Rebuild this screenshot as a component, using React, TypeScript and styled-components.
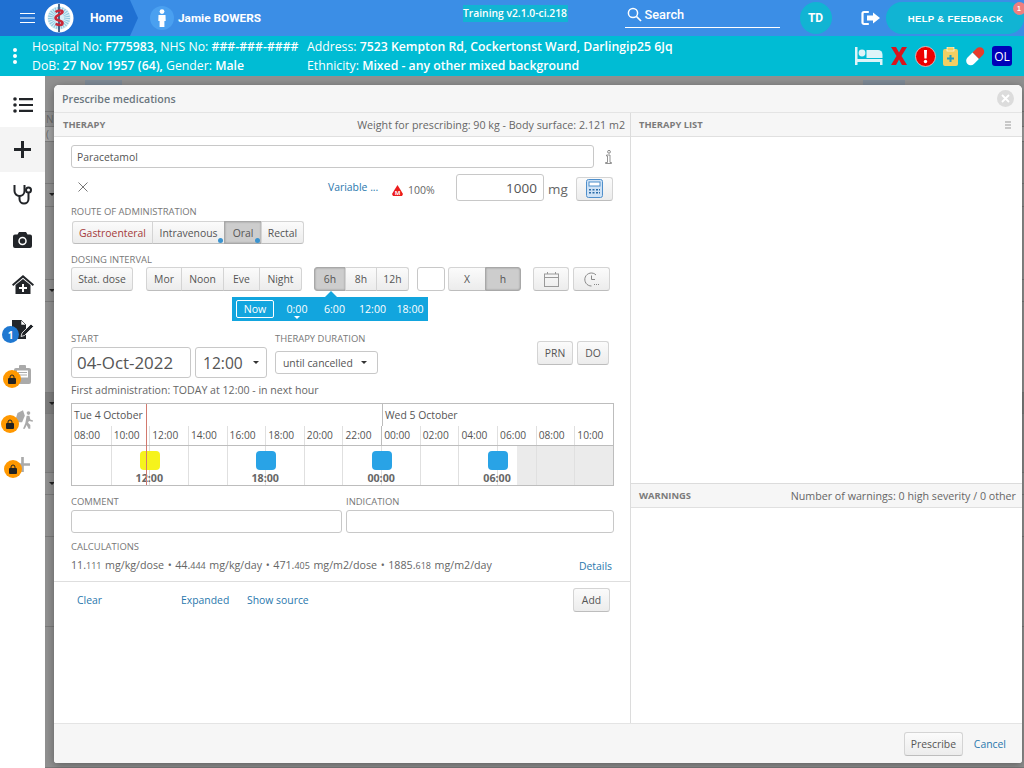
import React from "react";
import styled, { createGlobalStyle } from "styled-components";

const Global = createGlobalStyle`
  html, body { margin: 0; padding: 0; height: 768px; width: 1024px; overflow: hidden; background: #909090; }
  #root { width: 1024px; height: 768px; }
  * { box-sizing: border-box; }
`;

const Page = styled.div`
  position: relative;
  width: 1024px;
  height: 768px;
  overflow: hidden;
  display: flex;
  flex-direction: column;
  font-family: "Open Sans", sans-serif;
`;

const TopBar = styled.header`
  height: 36px;
  flex: none;
  display: flex;
  align-items: center;
  background: #3b8ee6;
  color: #fff;
  font-family: Roboto, sans-serif;
`;

const HomeCrumb = styled.div`
  height: 36px;
  width: 138px;
  flex: none;
  display: flex;
  align-items: center;
  padding-left: 20px;
  background: #1f70d2;
  clip-path: polygon(0 0, 130px 0, 138px 18px, 130px 36px, 0 36px);
  font-size: 12.2px;
  font-weight: 700;
`;

const Burger = styled.svg`
  width: 16px;
  height: 10px;
  flex: none;
`;

const LogoMark = styled.svg`
  width: 30px;
  height: 30px;
  flex: none;
  margin-left: 8px;
  margin-right: 16px;
`;

const Avatar = styled.div`
  width: 24px;
  height: 24px;
  border-radius: 50%;
  margin-left: 12px;
  background: #4aa0f0;
  display: flex;
  align-items: center;
  justify-content: center;
  flex: none;
`;

const PatientName = styled.div`
  font-size: 11.8px;
  font-weight: 700;
  margin-left: 4px;
  width: 284.5px;
  flex: none;
`;

const Version = styled.div`
  font-family: "Open Sans", sans-serif;
  background: #11b4d3;
  font-size: 10.3px;
  font-weight: 600;
  line-height: 17px;
  height: 17px;
  width: 105px;
  flex: none;
  margin-top: -9px;
  white-space: nowrap;
  text-align: center;
`;

const SearchBox = styled.div`
  margin-left: 57px;
  width: 155px;
  height: 24px;
  margin-top: -4px;
  padding: 0 0 3px 2px;
  flex: none;
  display: flex;
  align-items: center;
  gap: 3px;
  border-bottom: 1px solid #fff;
  font-size: 12.8px;
  font-weight: 500;
`;

const UserBadge = styled.div`
  width: 32px;
  height: 32px;
  margin-left: 20px;
  border-radius: 50%;
  background: #11b4d3;
  display: flex;
  align-items: center;
  justify-content: center;
  font-size: 12px;
  font-weight: 700;
  flex: none;
`;

const Exit = styled.svg`
  width: 20px;
  height: 16px;
  margin-left: 29px;
  flex: none;
`;

const HelpButton = styled.div`
  position: relative;
  width: 138px;
  height: 32px;
  margin-left: 5px;
  flex: none;
  border-radius: 16px;
  background: #11b4d3;
  display: flex;
  align-items: center;
  justify-content: center;
  font-family: "Liberation Sans", sans-serif;
  font-size: 9.6px;
  font-weight: 700;
  letter-spacing: 0.3px;
  padding-left: 2px;
`;

const Notice = styled.span`
  position: absolute;
  right: -2px;
  top: 0;
  width: 13px;
  height: 13px;
  border-radius: 50%;
  background: #ef7f7f;
  font-size: 7px;
  letter-spacing: 0;
  line-height: 13px;
  text-align: center;
`;

const PatientBar = styled.div`
  height: 40px;
  flex: none;
  display: flex;
  align-items: center;
  background: #00bcd4;
  color: #fff;
  font-size: 12.25px;
  line-height: 19px;
`;

const DotsSlot = styled.div`
  width: 32px;
  padding-right: 2px;
  display: flex;
  flex-direction: column;
  align-items: center;
  gap: 2px;
  flex: none;
`;

const Dot = styled.i`
  width: 4px;
  height: 4px;
  border-radius: 50%;
  background: #fff;
`;

const PatientCol = styled.div<{ $w: number }>`
  width: ${p => p.$w}px;
  flex: none;
  white-space: nowrap;
  b { font-weight: 600; }
`;

const AlertIcons = styled.div`
  flex: 1;
  display: flex;
  align-items: center;
  justify-content: flex-end;
  gap: 7px;
  padding-right: 12px;
`;

const OlBadge = styled.div`
  width: 20px;
  height: 20px;
  background: #0000b8;
  border-radius: 3px;
  font-size: 12px;
  text-align: center;
  line-height: 21px;
`;

const Body = styled.div`
  flex: 1;
  display: flex;
  min-height: 0;
`;

const Sidebar = styled.nav`
  width: 45px;
  flex: none;
  background: #fff;
  display: flex;
  flex-direction: column;
  padding-top: 6px;
`;

const SideItem = styled.div<{ $on?: boolean }>`
  position: relative;
  height: 45px;
  display: flex;
  align-items: center;
  justify-content: center;
  background: ${p => (p.$on ? "#f4f4f4" : "transparent")};
`;

const SideBadge = styled.span<{ $bg: string; $l: number; $t: number; $s: number }>`
  position: absolute;
  left: ${p => p.$l}px;
  top: ${p => p.$t}px;
  width: ${p => p.$s}px;
  height: ${p => p.$s}px;
  border-radius: 50%;
  background: ${p => p.$bg};
  color: #fff;
  font-size: 10px;
  font-weight: 700;
  display: flex;
  align-items: center;
  justify-content: center;
`;

const Backdrop = styled.div`
  flex: 1;
  background: #909090;
  display: flex;
  flex-direction: column;
  min-width: 0;
`;

const TabStrip = styled.div`
  height: 9px;
  flex: none;
  display: flex;
  padding-top: 4px;
`;

const TabShade = styled.i<{ $l: number; $w: number }>`
  margin-left: ${p => p.$l}px;
  width: ${p => p.$w}px;
  background: #7e8a96;
`;

const BgRow = styled.div<{ $h: number; $bg?: string }>`
  position: relative;
  height: ${p => p.$h}px;
  flex: none;
  background: ${p => p.$bg ?? "#909090"};
  border-bottom: 1px solid #7a7a7a;
  color: #666;
  font-size: 10px;
  line-height: ${p => p.$h}px;
  padding-left: 1px;
`;

const BgCaret = styled.i`
  position: absolute;
  left: 4px;
  top: 9px;
  border-left: 3px solid transparent;
  border-right: 3px solid transparent;
  border-top: 3px solid #222;
`;

const Modal = styled.section`
  position: absolute;
  left: 54px;
  top: 85px;
  width: 968px;
  height: 678px;
  background: #fff;
  border-radius: 5px 5px 3px 3px;
  box-shadow: 0 2px 8px rgba(0, 0, 0, 0.35);
  display: flex;
  flex-direction: column;
  color: #555;
  font-size: 10.4px;
`;

const ModalHead = styled.div`
  height: 28px;
  flex: none;
  display: flex;
  align-items: center;
  justify-content: space-between;
  padding: 0 8px;
  background: #f6f6f6;
  border-bottom: 1px solid #e4e4e4;
  border-radius: 5px 5px 0 0;
  font-size: 10.65px;
  font-weight: 600;
  color: #6b7780;
`;

const CloseDisc = styled.div`
  width: 17px;
  height: 17px;
  border-radius: 50%;
  background: #dcdcdc;
  display: flex;
  align-items: center;
  justify-content: center;
`;

const Panels = styled.div`
  flex: 1;
  display: flex;
  min-height: 0;
`;

const LeftPanel = styled.div`
  width: 577px;
  flex: none;
  border-right: 1px solid #dcdcdc;
  display: flex;
  flex-direction: column;
`;

const RightPanel = styled.div`
  flex: 1;
  display: flex;
  flex-direction: column;
`;

const SectionHead = styled.div`
  height: 24px;
  flex: none;
  display: flex;
  align-items: center;
  justify-content: space-between;
  padding: 0 5px 0 9px;
  background: #f6f6f6;
  border-bottom: 1px solid #e0e0e0;
  color: #777;
  b { font-size: 9.4px; font-weight: 700; color: #7b7b7b; }
`;

const RightHead = styled(SectionHead)`
  padding: 0 6px 0 8px;
`;

const HeadNote = styled.span`
  color: #666;
  font-size: 10.7px;
`;

const MenuGlyph = styled.svg`
  width: 6px;
  height: 8px;
  margin-right: 5px;
`;

const Form = styled.div`
  padding: 0 16px 0 17px;
  flex: none;
  display: flex;
  flex-direction: column;
`;

const DrugRow = styled.div`
  display: flex;
  align-items: center;
  margin-top: 8px;
`;

const TextBox = styled.div<{ $h?: number; $w?: number }>`
  height: ${p => p.$h ?? 23}px;
  ${p => (p.$w ? `width: ${p.$w}px; flex: none;` : "flex: 1;")}
  border: 1px solid #c8c8c8;
  border-radius: 3px;
  background: #fff;
  display: flex;
  align-items: center;
`;

const DrugName = styled.span`
  padding-left: 5px;
  font-size: 10.4px;
  color: #555;
`;

const InfoMark = styled.svg`
  width: 7px;
  height: 14px;
  margin-left: 11px;
  margin-right: 2px;
  flex: none;
`;

const DoseRow = styled.div`
  display: flex;
  align-items: center;
  height: 27px;
  margin-top: 6px;
`;

const Cross = styled.svg`
  width: 10px;
  height: 10px;
  margin-left: 7px;
  margin-top: -2px;
  flex: none;
`;

const Link = styled.a`
  color: #2a78ad;
  font-size: 10.4px;
`;

const VariableLink = styled(Link)`
  margin-left: 240px;
  width: 64px;
  flex: none;
  margin-top: -1px;
`;

const MassIcon = styled.svg`
  width: 11px;
  height: 11px;
  margin-top: 5px;
  flex: none;
`;

const Percent = styled.span`
  color: #666;
  font-size: 10.5px;
  margin-left: 5px;
  margin-top: 4px;
  width: 48px;
  flex: none;
`;

const DoseValue = styled.span`
  width: 100%;
  text-align: right;
  padding-right: 6px;
  font-size: 13.5px;
  color: #555;
`;

const Unit = styled.span`
  font-size: 13.4px;
  color: #666;
  margin-left: 4px;
  margin-right: 8px;
  margin-top: 3px;
`;

const Btn = styled.div<{ $w?: number; $h?: number; $on?: boolean; $red?: boolean }>`
  ${p => (p.$w ? `width: ${p.$w}px;` : "")}
  height: ${p => p.$h ?? 24}px;
  flex: none;
  display: flex;
  align-items: center;
  justify-content: center;
  position: relative;
  font-size: 10.4px;
  color: ${p => (p.$red ? "#a53a3a" : "#555")};
  border: 1px solid ${p => (p.$on ? "#a8a8a8" : "#d4d4d4")};
  border-bottom-color: ${p => (p.$on ? "#a8a8a8" : "#bdbdbd")};
  border-radius: 3px;
  background: ${p => (p.$on ? "#cdcdcd" : "linear-gradient(#fbfbfb, #ececec)")};
  ${p => (p.$on ? "box-shadow: inset 0 0 2px #8a8a8a;" : "")}
`;

const CalcBtn = styled(Btn)`
  margin-top: 2px;
`;

const Group = styled.div`
  display: flex;
  flex: none;
  ${Btn} { border-radius: 0; margin-left: -1px; }
  ${Btn}:first-child { border-radius: 3px 0 0 3px; margin-left: 0; }
  ${Btn}:last-child { border-radius: 0 3px 3px 0; }
`;

const MealGroup = styled(Group)`
  margin-left: 13px;
`;

const SixGroup = styled(Group)`
  margin-left: 12px;
`;

const XGroup = styled(Group)`
  margin-left: 3px;
`;

const BlankBox = styled(TextBox)`
  margin-left: 8px;
`;

const CalendarBtn = styled(Btn)`
  margin-left: 12px;
`;

const ClockBtn = styled(Btn)`
  margin-left: 4px;
`;

const FieldLabel = styled.div<{ $mt?: number }>`
  font-size: 9.45px;
  line-height: 12px;
  color: #777;
  margin-top: ${p => p.$mt ?? 0}px;
  white-space: nowrap;
`;

const RouteRow = styled.div`
  display: flex;
  margin-top: 3px;
  margin-left: 1px;
`;

const Pip = styled.i`
  position: absolute;
  right: 1px;
  bottom: 0;
  width: 5px;
  height: 5px;
  border-radius: 50%;
  background: #3a93cf;
  z-index: 1;
`;

const IntervalRow = styled.div`
  display: flex;
  align-items: center;
  margin-top: 1px;
`;

const TimesPop = styled.div`
  position: relative;
  align-self: flex-start;
  margin-left: 161px;
  width: 196px;
  height: 24px;
  margin-top: 6px;
  background: #12a5de;
  color: #fff;
  display: flex;
  align-items: center;
  font-size: 10.6px;
  &::before {
    content: "";
    position: absolute;
    left: 93px;
    top: -6px;
    border-left: 6px solid transparent;
    border-right: 6px solid transparent;
    border-bottom: 6px solid #12a5de;
  }
`;

const NowChip = styled.span`
  width: 38px;
  height: 18px;
  margin-left: 4px;
  border: 1px solid #fff;
  border-radius: 2px;
  display: flex;
  align-items: center;
  justify-content: center;
  flex: none;
`;

const Slot = styled.span<{ $w: number; $mark?: boolean }>`
  width: ${p => p.$w}px;
  flex: none;
  text-align: center;
  position: relative;
  ${p =>
    p.$mark
      ? `&::after {
    content: "";
    position: absolute;
    left: 50%;
    margin-left: -3px;
    bottom: -3px;
    border-left: 3px solid transparent;
    border-right: 3px solid transparent;
    border-top: 3px solid #fff;
  }`
      : ""}
`;

const StartRow = styled.div`
  display: flex;
  margin-top: 12px;
`;

const StartCol = styled.div<{ $w: number }>`
  width: ${p => p.$w}px;
  flex: none;
  display: flex;
  flex-direction: column;
`;

const DateField = styled(TextBox)`
  margin-top: 2px;
  font-size: 16.9px;
  color: #555;
  padding-left: 5px;
`;

const TimeField = styled(DateField)`
  padding-left: 7px;
  font-size: 15.6px;
  gap: 10px;
`;

const Caret = styled.i`
  width: 0;
  height: 0;
  border-left: 3.5px solid transparent;
  border-right: 3.5px solid transparent;
  border-top: 3.5px solid #333;
`;

const Until = styled(TextBox)`
  margin-top: 6px;
  font-size: 10.4px;
  color: #555;
  padding-left: 7px;
  gap: 8px;
`;

const SmallBtnGroup = styled.div`
  display: flex;
  gap: 4px;
  margin-left: auto;
  margin-right: 5px;
  margin-top: 8px;
  height: 24px;
`;

const FirstAdmin = styled.div`
  font-size: 10.6px;
  color: #666;
  margin-top: 5px;
  line-height: 15px;
`;

const Timeline = styled.div`
  position: relative;
  margin-top: 5px;
  height: 83px;
  width: 543px;
  border: 1px solid #bdbdbd;
  display: flex;
  flex-direction: column;
`;

const DayRow = styled.div`
  height: 22px;
  display: flex;
  font-size: 10.4px;
  color: #555;
  line-height: 22px;
`;

const Day = styled.span<{ $w: number; $line?: boolean }>`
  width: ${p => p.$w}px;
  flex: none;
  padding-left: 2px;
  ${p => (p.$line ? "border-left: 1px solid #bdbdbd;" : "")}
`;

const HourRow = styled.div`
  height: 20px;
  display: grid;
  grid-template-columns: repeat(14, 1fr);
  border-bottom: 1px solid #bdbdbd;
`;

const Hour = styled.span<{ $strong?: boolean }>`
  border-left: 1px solid ${p => (p.$strong ? "#bdbdbd" : "#e0e0e0")};
  &:first-child { border-left: 0; }
  font-size: 10.2px;
  color: #555;
  padding-left: 2px;
  line-height: 19px;
  white-space: nowrap;
  overflow: hidden;
`;

const SlotRow = styled.div`
  flex: 1;
  display: grid;
  grid-template-columns: repeat(14, 1fr);
`;

const Cell = styled.div<{ $grey?: boolean; $strong?: boolean }>`
  position: relative;
  border-left: 1px solid ${p => (p.$strong ? "#bdbdbd" : "#e0e0e0")};
  &:first-child { border-left: 0; }
  background: ${p => (p.$grey ? "#ebebeb" : "transparent")};
`;

const HalfGrey = styled.i`
  position: absolute;
  right: 0;
  top: 0;
  bottom: 0;
  width: 19px;
  background: #ebebeb;
`;

const Dose = styled.div<{ $c: string }>`
  position: absolute;
  left: 100%;
  margin-left: -9px;
  top: 5px;
  width: 20px;
  height: 19px;
  background: ${p => p.$c};
  border-radius: 4px;
  z-index: 1;
`;

const DoseTime = styled.span`
  position: absolute;
  left: 100%;
  margin-left: -20px;
  width: 40px;
  text-align: center;
  top: 26px;
  font-size: 10.7px;
  line-height: 13px;
  font-weight: 700;
  color: #666;
  z-index: 1;
`;

const NowLine = styled.i`
  position: absolute;
  left: 74px;
  top: 0;
  bottom: 0;
  width: 1px;
  background: #d2796e;
  z-index: 2;
`;

const TwoCols = styled.div`
  display: flex;
  gap: 4px;
  margin-top: 10px;
  width: 543px;
`;

const ColField = styled.div<{ $w: number }>`
  width: ${p => p.$w}px;
  flex: none;
  display: flex;
  flex-direction: column;
`;

const PlainInput = styled(TextBox)`
  flex: none;
  margin-top: 2px;
`;

const CalcRow = styled.div`
  display: flex;
  align-items: center;
  justify-content: space-between;
  margin-top: 5px;
  width: 541px;
  line-height: 14px;
`;

const CalcText = styled.span`
  font-size: 10.7px;
  word-spacing: 0.8px;
  color: #666;
  small { font-size: 9px; }
`;

const FormFoot = styled.div`
  margin-top: 8px;
  height: 38px;
  flex: none;
  border-top: 1px solid #dedede;
  display: flex;
  align-items: center;
  padding: 0 20px 2px 23px;
`;

const ClearLink = styled(Link)`
  width: 104px;
  flex: none;
`;

const ExpandLink = styled(Link)`
  width: 66px;
  flex: none;
`;

const AddBtn = styled(Btn)`
  margin-left: auto;
`;

const TherapyList = styled.div`
  height: 347px;
  flex: none;
  border-bottom: 1px solid #dcdcdc;
`;

const ModalFoot = styled.div`
  height: 40px;
  flex: none;
  background: #f6f6f6;
  border-top: 1px solid #e4e4e4;
  display: flex;
  align-items: center;
  justify-content: flex-end;
  gap: 11px;
  padding: 0 16px 0 0;
  border-radius: 0 0 3px 3px;
`;

const ICON = "#222529";
const hours = ["08:00","10:00","12:00","14:00","16:00","18:00","20:00","22:00","00:00","02:00","04:00","06:00","08:00","10:00"];

const Lock: React.FC = () => (
  <svg width="8" height="10" viewBox="0 0 8 10"><path d="M2 4V3a2 2 0 0 1 4 0v1" fill="none" stroke="#222" /><rect y="4" width="8" height="6" rx="1" fill="#222" /></svg>
);

export default function App() {
  return (
    <Page>
      <Global />
      <TopBar>
        <HomeCrumb>
          <Burger viewBox="0 0 16 10"><path d="M0 .5h15M0 5h15M0 9.5h15" stroke="#fff" strokeWidth="1" /></Burger>
          <LogoMark viewBox="0 0 30 30">
            <circle cx="15" cy="15" r="14.500" fill="#fff" />
            <circle cx="15" cy="15" r="11.500" fill="#d9eef6" />
            <circle cx="15" cy="15" r="8" fill="none" stroke="#8fc9e0" strokeWidth="6" strokeDasharray="1 1" />
            <path d="M15 1v28" stroke="#24466e" strokeWidth="1.600" />
            <path d="M11.500 9c3-2 7-2 7 0s-7 3-7 6 7 2 7 5-4 2-7 1" fill="none" stroke="#c8283a" strokeWidth="2.600" />
          </LogoMark>
          Home
        </HomeCrumb>
        <Avatar>
          <svg width="10" height="18" viewBox="0 0 10 18"><circle cx="5" cy="2.600" r="2.400" fill="#fff" /><path d="M1.500 6h7l.2 6H7.400v6H2.600v-6H1.300z" fill="#fff" /></svg>
        </Avatar>
        <PatientName>Jamie BOWERS</PatientName>
        <Version>Training v2.1.0-ci.218</Version>
        <SearchBox>
          <svg width="15" height="15" viewBox="0 0 15 15"><circle cx="6" cy="6" r="4.600" fill="none" stroke="#fff" strokeWidth="1.500" /><path d="M9.500 9.500l4.500 4.500" stroke="#fff" strokeWidth="1.700" /></svg>
          Search
        </SearchBox>
        <UserBadge>TD</UserBadge>
        <Exit viewBox="0 0 20 16">
          <path d="M7 2H3a1.500 1.500 0 0 0-1.500 1.500v9A1.500 1.500 0 0 0 3 14h4" fill="none" stroke="#fff" strokeWidth="2.200" strokeLinecap="round" />
          <path d="M12 2.500 19 8l-7 5.500V10.500H6v-5h6z" fill="#fff" />
        </Exit>
        <HelpButton>HELP &amp; FEEDBACK<Notice>1</Notice></HelpButton>
      </TopBar>

      <PatientBar>
        <DotsSlot><Dot /><Dot /><Dot /></DotsSlot>
        <PatientCol $w={275}>
          Hospital No: <b>F775983,</b> NHS No: <b>###-###-####</b><br />
          DoB: <b>27 Nov 1957 (64),</b> Gender: <b>Male</b>
        </PatientCol>
        <PatientCol $w={400}>
          Address: <b>7523 Kempton Rd, Cockertonst Ward, Darlingip25 6Jq</b><br />
          Ethnicity: <b>Mixed - any other mixed background</b>
        </PatientCol>
        <AlertIcons>
          <svg width="28" height="18" viewBox="0 0 28 18"><path d="M0 0h2.500v12h25v6H25v-3H2.500v3H0z" fill="#def4f8" /><circle cx="7" cy="6" r="3.400" fill="#def4f8" /><path d="M11.500 3H23a4.500 4.500 0 0 1 4.500 4.500V11h-16z" fill="#def4f8" /></svg>
          <svg width="18" height="20" viewBox="0 0 18 20"><path d="M1 1h5l3 5.500L12 1h5l-5.500 9L17 19h-5l-3-5.500L6 19H1l5.500-9z" fill="#d8141c" /></svg>
          <svg width="21" height="21" viewBox="0 0 21 21"><circle cx="10.500" cy="10.500" r="10" fill="#ee0000" stroke="#f5c8c8" strokeWidth=".8" /><path d="M9 4h3l-.4 8.500H9.400z" fill="#fff" /><circle cx="10.500" cy="15.500" r="1.700" fill="#fff" /></svg>
          <svg width="15" height="19" viewBox="0 0 15 19"><rect y="2" width="15" height="17" rx="2" fill="#f2cf63" /><rect x="4" width="7" height="4" fill="#f2cf63" stroke="#fff" strokeWidth=".6" /><path d="M6.500 8h2v2.500H11v2H8.500V15h-2v-2.500H4v-2h2.500z" fill="#1fa0c8" /></svg>
          <svg width="20" height="20" viewBox="0 0 20 20"><path d="M11.500 2.500a4.500 4.500 0 0 1 6.400 6.400l-4 4-6.400-6.400z" fill="#e73c2c" /><path d="M7.500 6.500l6.400 6.400-5 5a4.500 4.500 0 0 1-6.400-6.400z" fill="#fff" /></svg>
          <OlBadge>OL</OlBadge>
        </AlertIcons>
      </PatientBar>

      <Body>
        <Sidebar>
          <SideItem>
            <svg width="20" height="16" viewBox="0 0 20 16" fill={ICON}><circle cx="2" cy="2" r="1.800" /><circle cx="2" cy="8" r="1.800" /><circle cx="2" cy="14" r="1.800" /><path d="M6 1h14v2.200H6zM6 6.900h14v2.200H6zM6 12.800h14V15H6z" /></svg>
          </SideItem>
          <SideItem $on>
            <svg width="17" height="17" viewBox="0 0 17 17" fill={ICON}><path d="M7 0h3v7h7v3h-7v7H7v-7H0V7h7z" /></svg>
          </SideItem>
          <SideItem>
            <svg width="20" height="21" viewBox="0 0 20 21" fill="none" stroke={ICON} strokeWidth="2"><path d="M1.500 1v6a5 5 0 0 0 10 0V1" /><path d="M6.500 12v3a4.500 4.500 0 0 0 9 0V8" /><circle cx="15.500" cy="6" r="2.500" /></svg>
          </SideItem>
          <SideItem>
            <svg width="19" height="16" viewBox="0 0 19 16"><path d="M6 0h7l1.500 2.500H17a2 2 0 0 1 2 2V14a2 2 0 0 1-2 2H2a2 2 0 0 1-2-2V4.500a2 2 0 0 1 2-2h2.500z" fill={ICON} /><circle cx="9.500" cy="9" r="3.500" fill="none" stroke="#fff" strokeWidth="1.500" /></svg>
          </SideItem>
          <SideItem>
            <svg width="22" height="19" viewBox="0 0 22 19"><path d="M11 0 22 9.500l-1.200 1.500L11 2.700 1.200 11 0 9.500z" fill={ICON} /><path d="M3.500 10 11 4l7.500 6v9h-15z" fill={ICON} /><path d="M10 9h2v3h3v2h-3v3h-2v-3H7v-2h3z" fill="#fff" /></svg>
          </SideItem>
          <SideItem>
            <svg width="23" height="19" viewBox="0 0 23 19"><path d="M1 0h9l5 5v14H1z" fill={ICON} /><path d="M10 0v5h5z" fill="#fff" stroke={ICON} strokeWidth=".6" /><path d="M11 13 20 4l2.500 2.500-9 9-3.500 1z" fill={ICON} stroke="#fff" strokeWidth=".8" /></svg>
            <SideBadge $bg="#1f78d1" $l={2} $t={19} $s={17}>1</SideBadge>
          </SideItem>
          <SideItem>
            <svg width="19" height="19" viewBox="0 0 19 19"><rect x="1" y="3" width="17" height="16" rx="2" fill="#aaa" /><rect x="4" y="5.500" width="11" height="7" fill="#fff" /><path d="M5 7.500h9M5 10h9" stroke="#aaa" /><rect x="6" y="0" width="7" height="4" rx="1" fill="#aaa" /></svg>
            <SideBadge $bg="#ff9800" $l={3} $t={18} $s={18}><Lock /></SideBadge>
          </SideItem>
          <SideItem>
            <svg width="22" height="19" viewBox="0 0 24 20"><path d="M6 3l6-3 2 6-3 7H3z" fill="#aaa" /><circle cx="18" cy="3" r="2" fill="#aaa" /><path d="M16 6h3l1 4 3 1-.5 1.500-4-1-1 2 2.500 2.500V20h-2l-2-4-2 4h-2l2.500-6z" fill="#aaa" /></svg>
            <SideBadge $bg="#ff9800" $l={1} $t={18} $s={18}><Lock /></SideBadge>
          </SideItem>
          <SideItem>
            <svg width="15" height="15" viewBox="0 0 17 17" fill="#aaa"><path d="M7 0h3v7h7v3h-7v7H7v-7H0V7h7z" /></svg>
            <SideBadge $bg="#ff9800" $l={4} $t={18} $s={18}><Lock /></SideBadge>
          </SideItem>
        </Sidebar>
        <Backdrop>
          <TabStrip>
            <TabShade $l={40} $w={37} />
            <TabShade $l={741} $w={42} />
          </TabStrip>
          <BgRow $h={27} />
          <BgRow $h={15}>N</BgRow>
          <BgRow $h={15} $bg="#a3a3a3">(</BgRow>
          <BgRow $h={42} />
          <BgRow $h={23}><BgCaret /></BgRow>
          <BgRow $h={73} />
          <BgRow $h={22}><BgCaret /></BgRow>
          <BgRow $h={91} />
          <BgRow $h={21} $bg="#7d7d7d"><BgCaret /></BgRow>
          <BgRow $h={59} $bg="#888" />
          <BgRow $h={22}><BgCaret /></BgRow>
          <BgRow $h={42} />
          <BgRow $h={90} />
          <BgRow $h={141} />
        </Backdrop>
      </Body>

      <Modal>
        <ModalHead>
          Prescribe medications
          <CloseDisc>
            <svg width="9" height="9" viewBox="0 0 9 9"><path d="M1 1l7 7M8 1 1 8" stroke="#fff" strokeWidth="1.800" /></svg>
          </CloseDisc>
        </ModalHead>
        <Panels>
          <LeftPanel>
            <SectionHead><b>THERAPY</b><HeadNote>Weight for prescribing: 90 kg - Body surface: 2.121 m2</HeadNote></SectionHead>
            <Form>
              <DrugRow>
                <TextBox><DrugName>Paracetamol</DrugName></TextBox>
                <InfoMark viewBox="0 0 7 14"><circle cx="4" cy="1.800" r="1.400" fill="none" stroke="#888" /><path d="M1.500 5h3.500v7.500h1.500v1h-6v-1h2V6h-1z" fill="none" stroke="#888" strokeWidth=".9" /></InfoMark>
              </DrugRow>
              <DoseRow>
                <Cross viewBox="0 0 10 10"><path d="M.5.500l9 9M9.500.500l-9 9" stroke="#777" /></Cross>
                <VariableLink>Variable ...</VariableLink>
                <MassIcon viewBox="0 0 11 11"><path d="M5.500 0 8 4l3 5-1 2H1L0 9l3-5z" fill="#ec1c1c" /><text x="5.500" y="10" fontSize="6" fill="#fff" textAnchor="middle" fontWeight="700">M</text></MassIcon>
                <Percent>100%</Percent>
                <TextBox $w={88} $h={27}><DoseValue>1000</DoseValue></TextBox>
                <Unit>mg</Unit>
                <CalcBtn $w={37} $h={24}>
                  <svg width="17" height="19" viewBox="0 0 17 19"><rect x=".5" y=".5" width="16" height="18" rx="2" fill="#cfe2f5" stroke="#4f8fcb" /><rect x="3" y="3" width="11" height="4" fill="#fff" stroke="#4f8fcb" /><path d="M3 10h2v1.500H3zM6.500 10h2v1.500h-2zM10 10h2v1.500h-2zM13 10h1v1.500h-1zM3 13h2v1.500H3zM6.500 13h2v1.500h-2zM10 13h2v1.500h-2zM13 13h1v1.500h-1z" fill="#2b6ca8" /></svg>
                </CalcBtn>
              </DoseRow>
              <FieldLabel $mt={5}>ROUTE OF ADMINISTRATION</FieldLabel>
              <RouteRow>
                <Group>
                  <Btn $w={81} $h={23} $red>Gastroenteral</Btn>
                  <Btn $w={73} $h={23}>Intravenous<Pip /></Btn>
                  <Btn $w={38} $h={23} $on>Oral<Pip /></Btn>
                  <Btn $w={43} $h={23}>Rectal</Btn>
                </Group>
              </RouteRow>
              <FieldLabel $mt={10}>DOSING INTERVAL</FieldLabel>
              <IntervalRow>
                <Btn $w={62}>Stat. dose</Btn>
                <MealGroup>
                  <Btn $w={36}>Mor</Btn>
                  <Btn $w={43}>Noon</Btn>
                  <Btn $w={37}>Eve</Btn>
                  <Btn $w={43}>Night</Btn>
                </MealGroup>
                <SixGroup>
                  <Btn $w={32} $on>6h</Btn>
                  <Btn $w={32}>8h</Btn>
                  <Btn $w={33}>12h</Btn>
                </SixGroup>
                <BlankBox $w={28} $h={24} />
                <XGroup>
                  <Btn $w={38}>X</Btn>
                  <Btn $w={36} $on>h</Btn>
                </XGroup>
                <CalendarBtn $w={36}>
                  <svg width="15" height="15" viewBox="0 0 15 15" fill="none" stroke="#999"><rect x=".5" y="2" width="14" height="12.500" /><path d="M.5 5.500h14M3.500 0v2M11.500 0v2" /></svg>
                </CalendarBtn>
                <ClockBtn $w={37}>
                  <svg width="16" height="15" viewBox="0 0 16 15" fill="none" stroke="#888"><path d="M12 3A6.500 6.500 0 1 0 7.500 14" /><path d="M7.500 3.500v4h3.500" /><path d="M10 12.500h1M12 12.500h1M14 12.500h1" /></svg>
                </ClockBtn>
              </IntervalRow>
              <TimesPop>
                <NowChip>Now</NowChip>
                <Slot $w={46} $mark>0:00</Slot>
                <Slot $w={29}>6:00</Slot>
                <Slot $w={47}>12:00</Slot>
                <Slot $w={28}>18:00</Slot>
              </TimesPop>
              <StartRow>
                <StartCol $w={124}>
                  <FieldLabel>START</FieldLabel>
                  <DateField $w={120} $h={31}>04-Oct-2022</DateField>
                </StartCol>
                <StartCol $w={80}>
                  <FieldLabel>&nbsp;</FieldLabel>
                  <TimeField $w={72} $h={31}>12:00<Caret /></TimeField>
                </StartCol>
                <StartCol $w={110}>
                  <FieldLabel>THERAPY DURATION</FieldLabel>
                  <Until $w={103} $h={23}>until cancelled<Caret /></Until>
                </StartCol>
                <SmallBtnGroup>
                  <Btn $w={36}>PRN</Btn>
                  <Btn $w={32}>DO</Btn>
                </SmallBtnGroup>
              </StartRow>
              <FirstAdmin>First administration: TODAY at 12:00 - in next hour</FirstAdmin>
              <Timeline>
                <NowLine />
                <DayRow><Day $w={310}>Tue 4 October</Day><Day $w={231} $line>Wed 5 October</Day></DayRow>
                <HourRow>
                  {hours.map((h, i) => <Hour key={i} $strong={i === 8}>{h}</Hour>)}
                </HourRow>
                <SlotRow>
                  <Cell />
                  <Cell><Dose $c="#f6f31c" /><DoseTime>12:00</DoseTime></Cell>
                  <Cell />
                  <Cell />
                  <Cell><Dose $c="#29a3e6" /><DoseTime>18:00</DoseTime></Cell>
                  <Cell />
                  <Cell />
                  <Cell><Dose $c="#29a3e6" /><DoseTime>00:00</DoseTime></Cell>
                  <Cell />
                  <Cell />
                  <Cell><Dose $c="#29a3e6" /><DoseTime>06:00</DoseTime></Cell>
                  <Cell><HalfGrey /></Cell>
                  <Cell $grey />
                  <Cell $grey />
                </SlotRow>
              </Timeline>
              <TwoCols>
                <ColField $w={271}><FieldLabel>COMMENT</FieldLabel><PlainInput $h={23} /></ColField>
                <ColField $w={268}><FieldLabel>INDICATION</FieldLabel><PlainInput $h={23} /></ColField>
              </TwoCols>
              <FieldLabel $mt={8}>CALCULATIONS</FieldLabel>
              <CalcRow>
                <CalcText>11.<small>111</small> mg/kg/dose • 44.<small>444</small> mg/kg/day • 471.<small>405</small> mg/m2/dose • 1885.<small>618</small> mg/m2/day</CalcText>
                <Link>Details</Link>
              </CalcRow>
            </Form>
            <FormFoot>
              <ClearLink>Clear</ClearLink>
              <ExpandLink>Expanded</ExpandLink>
              <Link>Show source</Link>
              <AddBtn $w={37}>Add</AddBtn>
            </FormFoot>
          </LeftPanel>
          <RightPanel>
            <RightHead>
              <b>THERAPY LIST</b>
              <MenuGlyph viewBox="0 0 6 8"><path d="M0 1h6M0 4h6M0 7h6" stroke="#999" /></MenuGlyph>
            </RightHead>
            <TherapyList />
            <RightHead><b>WARNINGS</b><HeadNote>Number of warnings: 0 high severity / 0 other</HeadNote></RightHead>
          </RightPanel>
        </Panels>
        <ModalFoot>
          <Btn $w={59}>Prescribe</Btn>
          <Link>Cancel</Link>
        </ModalFoot>
      </Modal>
    </Page>
  );
}
